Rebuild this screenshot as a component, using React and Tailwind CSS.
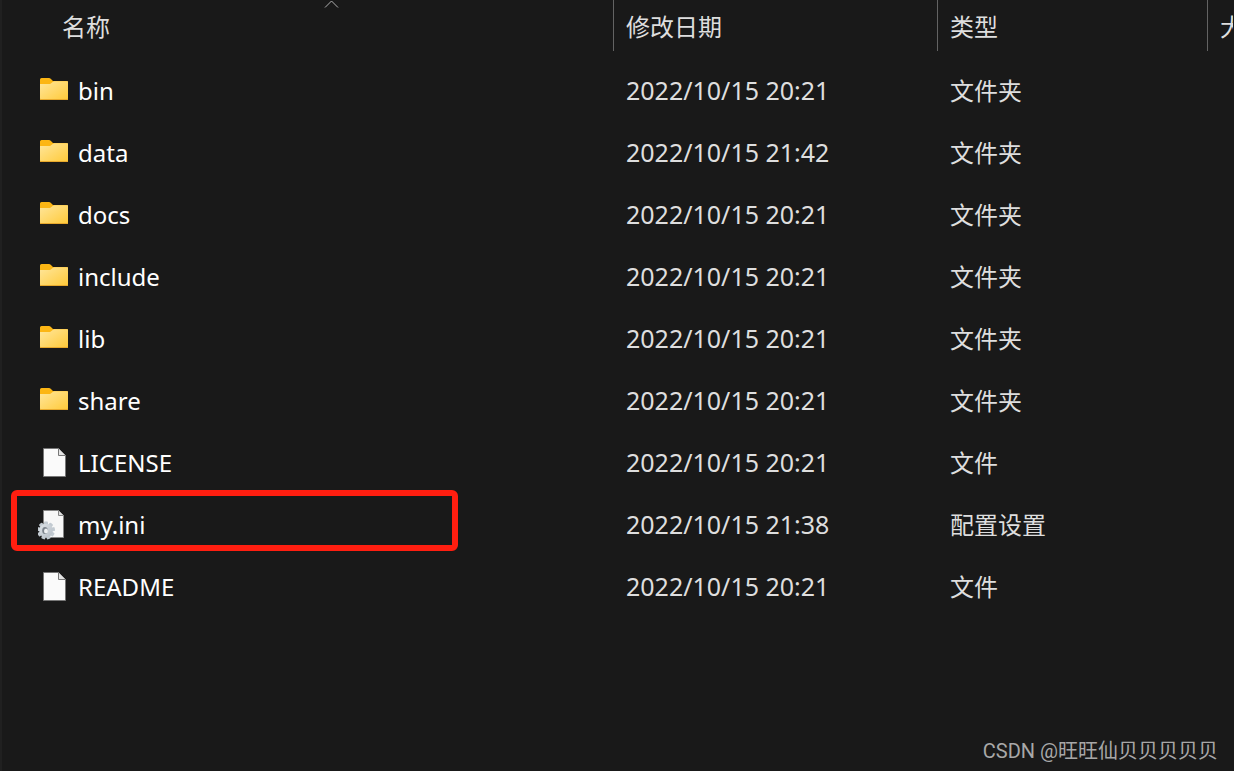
import React, { useState } from "react";

/* ---------------- DATA ---------------- */

const files = [
  { name: "bin", kind: "folder", modified: "2022/10/15 20:21", type: "文件夹" },
  { name: "data", kind: "folder", modified: "2022/10/15 21:42", type: "文件夹" },
  { name: "docs", kind: "folder", modified: "2022/10/15 20:21", type: "文件夹" },
  { name: "include", kind: "folder", modified: "2022/10/15 20:21", type: "文件夹" },
  { name: "lib", kind: "folder", modified: "2022/10/15 20:21", type: "文件夹" },
  { name: "share", kind: "folder", modified: "2022/10/15 20:21", type: "文件夹" },
  { name: "LICENSE", kind: "file", modified: "2022/10/15 20:21", type: "文件" },
  { name: "my.ini", kind: "config", modified: "2022/10/15 21:38", type: "配置设置", marked: true },
  { name: "README", kind: "file", modified: "2022/10/15 20:21", type: "文件" },
];

const columns = [
  { key: "name", label: "名称" },
  { key: "modified", label: "修改日期" },
  { key: "type", label: "类型" },
  { key: "size", label: "大小" },
];

/* ---------------- ICONS ---------------- */

function FolderIcon() {
  return (
    <svg width="32" height="32" viewBox="0 0 32 32" aria-hidden="true">
      <defs>
        <linearGradient id="folder-front" x1="0" y1="0" x2="1" y2="1">
          <stop offset="0" stopColor="#ffe69b" />
          <stop offset="1" stopColor="#ffca3a" />
        </linearGradient>
      </defs>
      <path d="M2 4.500Q2 3 3.500 3H11q1 0 1.700.7L15 6h13.500Q30 6 30 7.500V12H2Z" fill="#fcb614" />
      <path d="M2 9h9q1 0 1.800-.6L15 6.700q.5-.4 1.200-.4H30V23.500q0 1-1 1H3q-1 0-1-1Z" fill="url(#folder-front)" />
      <path d="M2 24.500h28" stroke="#e8a92c" />
    </svg>
  );
}

function FileIcon() {
  return (
    <svg width="32" height="32" viewBox="0 0 32 32" aria-hidden="true">
      <path d="M5.500 1.500h15l7 7v21h-22Z" fill="#fafafa" stroke="#777777" />
      <path d="M20.500 1.500v7h7" fill="#e4e4e4" stroke="#777777" />
    </svg>
  );
}

function ConfigIcon() {
  const teeth = [0, 40, 80, 120, 160, 200, 240, 280, 320];

  return (
    <svg width="32" height="32" viewBox="0 0 32 32" aria-hidden="true">
      <defs>
        <linearGradient id="gear-metal" x1="0" y1="0" x2="1" y2="1">
          <stop offset="0" stopColor="#dfe4e9" />
          <stop offset="1" stopColor="#b4bcc4" />
        </linearGradient>
      </defs>
      <path d="M5.500 1.500h15l5 5v22h-20Z" fill="#f7f7f7" stroke="#858585" />
      <path d="M20.500 1.500v5h5" fill="#dedede" stroke="#858585" />
      {teeth.map((angle) => (
        <rect
          key={angle}
          x="6"
          y="12.500"
          width="4"
          height="5"
          rx="1"
          fill="#c2cad1"
          transform={`rotate(${angle} 8 21.500)`}
        />
      ))}
      <circle cx="8" cy="21.500" r="6.800" fill="url(#gear-metal)" />
      <ellipse cx="7" cy="21.500" rx="2.800" ry="3.500" fill="#7d858d" />
      <ellipse cx="8" cy="22" rx="2" ry="2.600" fill="#eef0f2" />
    </svg>
  );
}

const icons = { folder: FolderIcon, file: FileIcon, config: ConfigIcon };

/* ---------------- FILE LIST ---------------- */

export default function App() {
  const [sortKey, setSortKey] = useState("name");

  const rows = [...files].sort((a, b) =>
    sortKey === "name" || !a[sortKey] ? 0 : a[sortKey].localeCompare(b[sortKey])
  );

  return (
    <div className="relative min-h-screen overflow-hidden border-l-2 border-[#202020] bg-[#191919] font-['Noto_Sans','Noto_Sans_CJK_SC',sans-serif] text-[#dedede]">
      <table className="w-full table-fixed border-collapse text-left">
        <colgroup>
          <col className="w-[612px]" />
          <col className="w-[324px]" />
          <col className="w-[270px]" />
          <col />
        </colgroup>

        <thead>
          <tr>
            {columns.map((col) => (
              <th key={col.key} className="h-[60px] p-0 align-top font-normal">
                <button
                  type="button"
                  onClick={() => setSortKey(col.key)}
                  className={`relative flex h-[51px] w-full items-center overflow-hidden whitespace-nowrap pt-0.5 text-2xl ${
                    col.key === "name" ? "pl-[60px]" : "-ml-px border-l border-[#636363] pl-3"
                  }`}
                >
                  {col.label}
                  {col.key === sortKey && (
                    <svg
                      className="absolute left-[322px] top-0"
                      width="15"
                      height="9"
                      viewBox="0 0 15 9"
                      fill="none"
                      stroke="#b0b0b0"
                      aria-hidden="true"
                    >
                      <path d="M1 7.500 7.500 1 14 7.500" />
                    </svg>
                  )}
                </button>
              </th>
            ))}
          </tr>
        </thead>

        <tbody>
          {rows.map((file) => {
            const Icon = icons[file.kind];
            return (
              <tr key={file.name} className="h-[62px]">
                <td className="relative p-0">
                  <div className="flex items-center gap-2 pl-9 text-2xl text-white">
                    <Icon />
                    <span>{file.name}</span>
                  </div>
                  {file.marked && (
                    <div className="absolute -top-1 left-[9px] h-[61px] w-[447px] rounded-md border-6 border-[#ff1e10]" />
                  )}
                </td>
                <td className="p-0 pl-3 text-[25px]">{file.modified}</td>
                <td className="p-0 pl-3 text-2xl">{file.type}</td>
                <td className="p-0" />
              </tr>
            );
          })}
        </tbody>
      </table>

      <div className="absolute bottom-1.5 right-4 font-[Roboto,'Noto_Sans_CJK_SC',sans-serif] text-xl text-[#a8a8a8]">
        CSDN @旺旺仙贝贝贝贝贝
      </div>
    </div>
  );
}
